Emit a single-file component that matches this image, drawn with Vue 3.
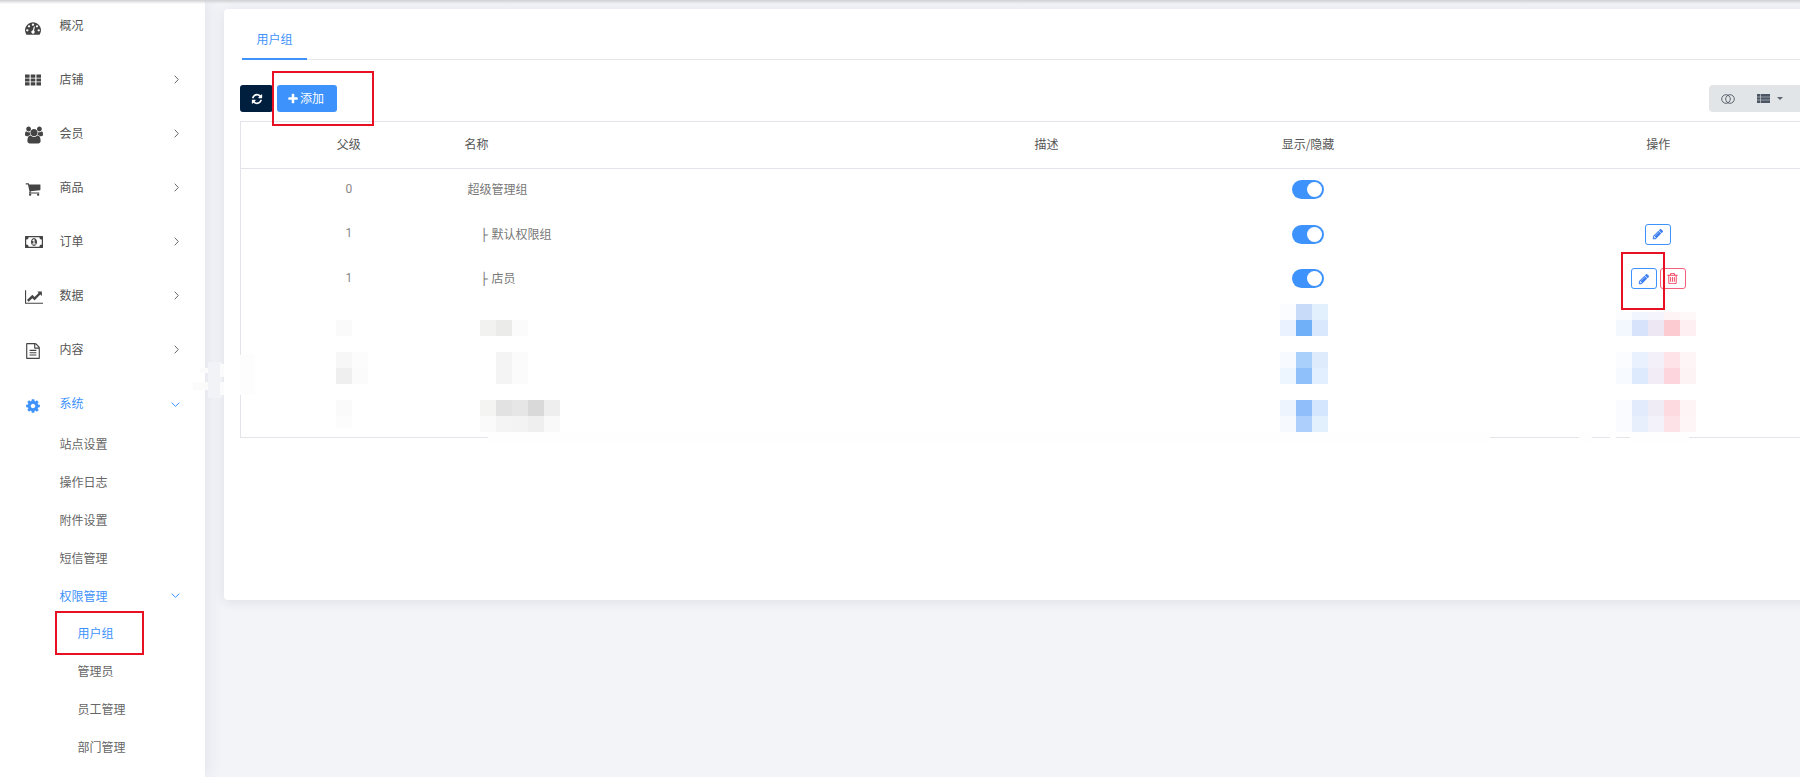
<script setup>
const fa = {
  dashboard: 'M384 1152q0-53-37.5-90.5t-90.5-37.5-90.5 37.5-37.5 90.5 37.5 90.5 90.5 37.5 90.5-37.5 37.5-90.5zm192-448q0-53-37.5-90.5t-90.5-37.5-90.5 37.5-37.5 90.5 37.5 90.5 90.5 37.5 90.5-37.5 37.5-90.5zm428 481l101-382q6-26-7.5-48.5t-38.5-29.5-48 6.5-30 39.5l-101 382q-60 5-107 43.5t-63 98.5q-20 77 20 146t117 89 146-20 89-117q16-60-6-117t-72-91zm660-33q0-53-37.5-90.5t-90.5-37.5-90.5 37.5-37.5 90.5 37.5 90.5 90.5 37.5 90.5-37.5 37.5-90.5zm-640-640q0-53-37.5-90.5t-90.5-37.5-90.5 37.5-37.5 90.5 37.5 90.5 90.5 37.5 90.5-37.5 37.5-90.5zm448 192q0-53-37.5-90.5t-90.5-37.5-90.5 37.5-37.5 90.5 37.5 90.5 90.5 37.5 90.5-37.5 37.5-90.5zm320 448q0 261-141 483-19 29-54 29h-1402q-35 0-54-29-141-221-141-483 0-182 71-348t191-286 286-191 348-71 348 71 286 191 191 286 71 348z',
  th: 'M0 288h512v352H0zM640 288h512v352H640zM1280 288h512v352h-512zM0 720h512v352H0zM640 720h512v352H640zM1280 720h512v352h-512zM0 1152h512v352H0zM640 1152h512v352H640zM1280 1152h512v352h-512z',
  users: 'M593 896q-162 5-265 128h-134q-82 0-138-40.5t-56-118.5q0-353 124-353 6 0 43.5 21t97.5 42.5 119 21.5q67 0 133-23-5 37-5 66 0 139 81 256zm1071 637q0 120-73 189.5t-194 69.5h-874q-121 0-194-69.5t-73-189.5q0-53 3.5-103.5t14-109 26.5-108.5 43-97.5 62-81 85.5-53.5 111.5-20q10 0 43 21.5t73 48 107 48 135 21.5 135-21.5 107-48 73-48 43-21.5q61 0 111.5 20t85.5 53.5 62 81 43 97.5 26.5 108.5 14 109 3.5 103.5zm-1024-1277q0 106-75 181t-181 75-181-75-75-181 75-181 181-75 181 75 75 181zm704 384q0 159-112.5 271.5t-271.5 112.5-271.5-112.5-112.5-271.5 112.5-271.5 271.5-112.5 271.5 112.5 112.5 271.5zm576 225q0 78-56 118.5t-138 40.5h-134q-103-123-265-128 81-117 81-256 0-29-5-66 66 23 133 23 59 0 119-21.5t97.5-42.5 43.5-21q124 0 124 353zm-128-609q0 106-75 181t-181 75-181-75-75-181 75-181 181-75 181 75 75 181z',
  cart: 'M704 1536q0 52-38 90t-90 38-90-38-38-90 38-90 90-38 90 38 38 90zm896 0q0 52-38 90t-90 38-90-38-38-90 38-90 90-38 90 38 38 90zm128-1088v512q0 24-16.5 42.5t-40.5 21.5l-1044 122q13 60 13 70 0 16-24 64h920q26 0 45 19t19 45-19 45-45 19h-1024q-26 0-45-19t-19-45q0-11 8-31.5t16-36 21.5-40 15.5-29.5l-177-823h-204q-26 0-45-19t-19-45 19-45 45-19h256q16 0 28.5 6.5t19.5 15.5 13 24.5 8 26 5.5 29.5 4.5 26h1201q26 0 45 19t19 45z',
  money: 'M768 1152h384v-96h-128v-448h-114l-148 137 77 80q42-37 55-57h2v288h-128v96zm512-256q0 70-21 142t-59.5 134-101.5 101-138 39-138-39-101.5-101-59.5-134-21-142 21-142 59.5-134 101.5-101 138-39 138 39 101.5 101 59.5 134 21 142zm512 256v-512q-106 0-181-75t-75-181h-1152q0 106-75 181t-181 75v512q106 0 181 75t75 181h1152q0-106 75-181t181-75zm128-832v1152q0 26-19 45t-45 19h-1792q-26 0-45-19t-19-45v-1152q0-26 19-45t45-19h1792q26 0 45 19t19 45z',
  chart: 'M2048 1536v128h-2048v-1536h128v1408h1920zm-128-1248v435q0 21-19.5 29.5t-35.5-7.5l-121-121-633 633q-10 10-23 10t-23-10l-233-233-416 416-192-192 585-585q10-10 23-10t23 10l233 233 464-464-121-121q-16-16-7.5-35.5t29.5-19.5h435q14 0 23 9t9 23z',
  file: 'M1596 380q28 28 48 76t20 88v1152q0 40-28 68t-68 28h-1344q-40 0-68-28t-28-68v-1600q0-40 28-68t68-28h896q40 0 88 20t76 48zm-444-244v376h376q-10-29-22-41l-313-313q-12-12-41-22zm384 1528v-1024h-416q-40 0-68-28t-28-68v-416h-768v1536h1280zm-1024-864q0-14 9-23t23-9h704q14 0 23 9t9 23v64q0 14-9 23t-23 9h-704q-14 0-23-9t-9-23v-64zm736 224q14 0 23 9t9 23v64q0 14-9 23t-23 9h-704q-14 0-23-9t-9-23v-64q0-14 9-23t23-9h704zm0 256q14 0 23 9t9 23v64q0 14-9 23t-23 9h-704q-14 0-23-9t-9-23v-64q0-14 9-23t23-9h704z',
  cog: 'M1152 896q0-106-75-181t-181-75-181 75-75 181 75 181 181 75 181-75 75-181zm512-109v222q0 12-8 23t-20 13l-185 28q-19 54-39 91 35 50 107 138 10 12 10 25t-9 23q-27 37-99 108t-94 71q-12 0-26-9l-138-108q-44 23-91 38-16 136-29 186-7 28-36 28h-222q-14 0-24.5-8.5t-11.5-21.5l-28-184q-49-16-90-37l-141 107q-10 9-25 9-14 0-25-11-126-114-165-168-7-10-7-23 0-12 8-23 15-21 51-66.5t54-70.5q-27-50-41-99l-183-27q-13-2-21-12.5t-8-23.5v-222q0-12 8-23t19-13l186-28q14-46 39-92-40-57-107-138-10-12-10-24 0-10 9-23 26-36 98.5-107.5t94.5-71.5q13 0 26 10l138 107q44-23 91-38 16-136 29-186 7-28 36-28h222q14 0 24.5 8.5t11.5 21.5l28 184q49 16 90 37l142-107q9-9 24-9 13 0 25 10 129 119 165 170 7 8 7 22 0 12-8 23-15 21-51 66.5t-54 70.5q26 50 41 98l183 28q13 2 21 12.5t8 23.5z',
  refresh: 'M1639 1056q0 5-1 7-64 268-268 434.5t-478 166.5q-146 0-282.5-55t-243.5-157l-129 129q-19 19-45 19t-45-19-19-45v-448q0-26 19-45t45-19h448q26 0 45 19t19 45-19 45l-137 137q71 66 161 102t187 36q134 0 250-65t186-179q11-17 53-117 8-23 30-23h192q13 0 22.5 9.5t9.5 22.5zm25-800v448q0 26-19 45t-45 19h-448q-26 0-45-19t-19-45 19-45l138-138q-148-137-349-137-134 0-250 65t-186 179q-11 17-53 117-8 23-30 23h-199q-13 0-22.5-9.5t-9.5-22.5v-7q65-268 270-434.5t480-166.5q146 0 284 55.5t245 156.5l130-129q19-19 45-19t45 19 19 45z',
  plus: 'M1600 736v192q0 40-28 68t-68 28h-416v416q0 40-28 68t-68 28h-192q-40 0-68-28t-28-68v-416h-416q-40 0-68-28t-28-68v-192q0-40 28-68t68-28h416v-416q0-40 28-68t68-28h192q40 0 68 28t28 68v416h416q40 0 68 28t28 68z',
  pencil: 'M491 1536l91-91-235-235-91 91v107h128v128h107zm523-928q0-22-22-22-10 0-17 7l-542 542q-7 7-7 17 0 22 22 22 10 0 17-7l542-542q7-7 7-17zm-54-192l416 416-832 832h-416v-416zm683 96q0 53-37 90l-166 166-416-416 166-165q36-38 90-38 53 0 91 38l235 234q37 39 37 91z',
  trash: 'M704 736v576q0 14-9 23t-23 9h-64q-14 0-23-9t-9-23v-576q0-14 9-23t23-9h64q14 0 23 9t9 23zm256 0v576q0 14-9 23t-23 9h-64q-14 0-23-9t-9-23v-576q0-14 9-23t23-9h64q14 0 23 9t9 23zm256 0v576q0 14-9 23t-23 9h-64q-14 0-23-9t-9-23v-576q0-14 9-23t23-9h64q14 0 23 9t9 23zm128 724v-948h-896v948q0 22 7 40.5t14.5 27 10.5 8.5h832q3 0 10.5-8.5t14.5-27 7-40.5zm-672-1076h448l-48-117q-7-9-17-11h-317q-10 2-17 11zm928 32v64q0 14-9 23t-23 9h-96v948q0 83-47 143.5t-113 60.5h-832q-66 0-113-58.5t-47-141.5v-952h-96q-14 0-23-9t-9-23v-64q0-14 9-23t23-9h309l70-167q15-37 54-63t79-26h320q40 0 79 26t54 63l70 167h309q14 0 23 9t9 23z',
  list: 'M0 288h416v352H0zM496 288h1296v352H496zM0 720h416v352H0zM496 720h1296v352H496zM0 1152h416v352H0zM496 1152h1296v352H496z'
}

const menu = [
  { label: '概况', icon: 'dashboard', vb: '0 0 1792 1792', w: 16, shift: 3 },
  { label: '店铺', icon: 'th', vb: '0 0 1792 1792', w: 16, arrow: true, shift: 1 },
  { label: '会员', icon: 'users', vb: '0 0 1920 1792', w: 18, arrow: true, shift: 2 },
  { label: '商品', icon: 'cart', vb: '0 0 1792 1792', w: 16, arrow: true, shift: 2 },
  { label: '订单', icon: 'money', vb: '0 0 1920 1792', w: 18, arrow: true, shift: 1 },
  { label: '数据', icon: 'chart', vb: '0 0 2048 1792', w: 18, arrow: true, shift: 2 },
  { label: '内容', icon: 'file', vb: '0 0 1792 1792', w: 16, arrow: true, shift: 2 }
]
const subs = ['站点设置', '操作日志', '附件设置', '短信管理']
const leaves = ['用户组', '管理员', '员工管理', '部门管理']

const rows = [
  { parent: '0', name: '超级管理组', ops: [] },
  { parent: '1', name: '默认权限组', child: true, ops: ['edit'] },
  { parent: '1', name: '店员', child: true, ops: ['edit', 'del'] },
  { blank: true },
  { blank: true },
  { blank: true }
]

function block(x, y, colors, h = 16) {
  return colors.map((c, i) => ({ x: x + i * 16, y, c, h }))
}
const mosaic = [
  ...block(1280, 304, ['#fafcff', '#c8dcfa', '#e2effd']),
  ...block(1280, 320, ['#e9f2fe', '#6fb0f9', '#d9e8fd']),
  ...block(1280, 352, ['#f7fbff', '#a9cffb', '#ddebfd']),
  ...block(1280, 368, ['#edf5fe', '#8fc0fa', '#e1effe']),
  ...block(1280, 400, ['#edf4fe', '#8fbefa', '#d4e6fd']),
  ...block(1280, 416, ['#f6faff', '#acd0fb', '#e2f0fe']),
  ...block(1616, 312, ['#fafcfe', '#f1f5fe', '#f5f3fb', '#fef4f5', '#fff8f8'], 8),
  ...block(1616, 320, ['#f2f8fd', '#d7e3fb', '#ece7f3', '#fccbd2', '#fef0f2']),
  ...block(1616, 352, ['#fafcff', '#eaf1fe', '#f3f0fa', '#fee3e8', '#fef5f6']),
  ...block(1616, 368, ['#f7fafe', '#dde9fd', '#f1ecf5', '#fcd6dc', '#fef3f4']),
  ...block(1616, 400, ['#f9fbff', '#e2ebfc', '#efecf5', '#fdd9e0', '#fef3f5']),
  ...block(1616, 416, ['#fafbff', '#e7effd', '#f3f1f9', '#fde2e7', '#fef5f7']),
  ...block(336, 320, ['#fafafa']),
  ...block(336, 352, ['#f7f7f7', '#fcfcfc']),
  ...block(336, 368, ['#efefef', '#fbfbfb']),
  ...block(336, 400, ['#fafafa']),
  ...block(336, 416, ['#fcfcfc'], 12),
  ...block(480, 320, ['#f2f2f1', '#ebebe9', '#fbfbfb']),
  ...block(496, 352, ['#f4f4f4', '#fbfbfb']),
  ...block(496, 368, ['#f4f4f4', '#fbfbfb']),
  ...block(480, 400, ['#f4f4f3', '#e2e2e2', '#e6e6e6', '#d9d9d9', '#eeeeee']),
  ...block(480, 416, ['#fafafa', '#f4f4f4', '#f3f3f3', '#efefef', '#f9f9f9'])
]
const smudges = [
  { x: 208, y: 362, w: 14, h: 36, c: '#f2f3f7' },
  { x: 200, y: 368, w: 8, h: 5, c: '#fbfbfc' },
  { x: 193, y: 382, w: 15, h: 8, c: '#fbfbfc' },
  { x: 220, y: 364, w: 4, h: 13, c: '#fbfbfc' },
  { x: 220, y: 382, w: 4, h: 13, c: '#fbfbfc' },
  { x: 240, y: 355, w: 15, h: 40, c: '#fcfdfc' },
  { x: 488, y: 432, w: 1002, h: 10, c: '#fdfefd' },
  { x: 1579, y: 432, w: 13, h: 10, c: '#fdfefd' },
  { x: 1610, y: 432, w: 6, h: 10, c: '#fdfefd' },
  { x: 1630, y: 432, w: 59, h: 10, c: '#fdfefd' }
]
</script>

<template>
  <div class="shell">
    <aside class="sidebar">
      <ul class="menu">
        <li v-for="m in menu" :key="m.label" class="item">
          <svg class="mi" :class="'s' + m.shift" :width="m.w" :height="m.w" :viewBox="m.vb"><path :d="fa[m.icon]" /></svg>
          <span class="label">{{ m.label }}</span>
          <svg v-if="m.arrow" class="chev" width="5" height="9" viewBox="0 0 5 9"><path d="M.7.7 4.3 4.5.7 8.3" /></svg>
        </li>
        <li class="item active open">
          <svg class="mi s2" width="16" height="16" viewBox="0 0 1792 1792"><path :d="fa.cog" /></svg>
          <span class="label">系统</span>
          <svg class="chevd" width="9" height="5" viewBox="0 0 9 5"><path d="M.7.7 4.5 4.3 8.3.7" /></svg>
        </li>
        <li v-for="s in subs" :key="s" class="sub">{{ s }}</li>
        <li class="sub active between">
          <span>权限管理</span>
          <svg class="chevd" width="9" height="5" viewBox="0 0 9 5"><path d="M.7.7 4.5 4.3 8.3.7" /></svg>
        </li>
        <li v-for="(l, i) in leaves" :key="l" class="leaf" :class="{ active: i === 0 }">{{ l }}</li>
      </ul>
    </aside>

    <main class="main">
      <section class="card">
        <nav class="tabs"><a class="tab">用户组</a></nav>
        <div class="toolbar">
          <div class="left">
            <button class="btn navy"><svg width="12" height="12" viewBox="0 0 1792 1792"><path :d="fa.refresh" /></svg></button>
            <button class="btn blue"><svg width="12" height="12" viewBox="0 0 1792 1792"><path :d="fa.plus" /></svg><span>添加</span></button>
          </div>
          <div class="group">
            <svg class="rings" width="14" height="10" viewBox="0 0 14 10"><circle cx="5" cy="5" r="4.3" /><circle cx="9" cy="5" r="4.3" /></svg>
            <svg class="thl" width="13" height="13" viewBox="0 0 1792 1792"><path :d="fa.list" /></svg>
            <span class="caret"></span>
          </div>
        </div>
        <table class="table">
          <colgroup>
            <col class="c1" /><col class="c2" /><col class="c3" /><col class="c4" /><col class="c5" />
          </colgroup>
          <thead>
            <tr>
              <th>父级</th><th class="tl">名称</th><th>描述</th><th>显示/隐藏</th><th>操作</th>
            </tr>
          </thead>
          <tbody>
            <tr v-for="(r, i) in rows" :key="i">
              <template v-if="!r.blank">
                <td class="num">{{ r.parent }}</td>
                <td class="tl name" :class="{ child: r.child }"><span v-if="r.child" class="tree">├</span>{{ r.name }}</td>
                <td></td>
                <td class="flat"><div class="swrap"><span class="switch"><i></i></span></div></td>
                <td class="flat">
                  <div class="ops">
                    <button v-if="r.ops.includes('edit')" class="op edit"><svg width="12" height="12" viewBox="0 0 1792 1792"><path :d="fa.pencil" /></svg></button>
                    <button v-if="r.ops.includes('del')" class="op del"><svg width="13" height="13" viewBox="0 0 1792 1792"><path :d="fa.trash" /></svg></button>
                  </div>
                </td>
              </template>
              <td v-else colspan="5"></td>
            </tr>
          </tbody>
        </table>
      </section>
    </main>

    <div class="topshade"></div>

    <div v-for="(s, i) in smudges" :key="'s' + i" class="patch" :style="{ left: s.x + 'px', top: s.y + 'px', width: s.w + 'px', height: s.h + 'px', background: s.c }"></div>
    <div v-for="(b, i) in mosaic" :key="'m' + i" class="patch" :style="{ left: b.x + 'px', top: b.y + 'px', height: b.h + 'px', background: b.c }"></div>

    <div class="mark mark-add"></div>
    <div class="mark mark-edit"></div>
    <div class="mark mark-nav"></div>
  </div>
</template>

<style>
html, body { margin: 0; overflow: hidden; background: #f3f4f8; }
</style>

<style scoped>
.shell {
  position: relative;
  display: flex;
  width: 1800px;
  height: 777px;
  overflow: hidden;
  background: #f3f4f8;
  font-family: "Noto Sans CJK SC", Roboto, "Liberation Sans", sans-serif;
  font-size: 12px;
  color: #666;
}
.topshade {
  position: absolute;
  left: 0;
  top: 0;
  width: 100%;
  height: 4px;
  background: linear-gradient(#cfd0d2, rgba(220, 221, 224, 0));
}
.sidebar {
  flex: 0 0 205px;
  background: #fff;
  box-shadow: 0 0 18px rgba(40, 50, 90, .1);
  position: relative;
}
.menu { list-style: none; margin: -2px 0 0; padding: 0; }
.item {
  display: flex;
  align-items: center;
  height: 54px;
  padding-left: 25px;
  color: #555;
}
.mi { fill: #444; flex: none; }
.s1 { margin-top: 2px; }
.s2 { margin-top: 4px; }
.s3 { margin-top: 6px; }
.label { position: absolute; left: 59.5px; margin-top: -2px; }
.chev { position: absolute; left: 173.5px; fill: none; stroke: #666; stroke-width: 1; }
.chevd { fill: none; stroke: #3d92fc; stroke-width: 1; }
.item .chevd { position: absolute; left: 171px; }
.item.active { color: #3d92fc; }
.item.active .mi { fill: #3d92fc; }
.item.open { height: 49px; align-items: flex-start; padding-top: 18px; box-sizing: border-box; }
.item.open .label { top: 394px; margin-top: 0; }
.item.open .chevd { top: 402px; }
.sub {
  height: 38px;
  line-height: 38px;
  padding-left: 59.5px;
  color: #666;
}
.sub.active { color: #3d92fc; }
.between { position: relative; }
.between .chevd { position: absolute; left: 171px; top: 16px; }
.leaf {
  height: 38px;
  line-height: 36px;
  padding-left: 77.5px;
  color: #666;
}
.leaf.active { color: #3d92fc; }

.main { flex: 1; min-width: 0; padding: 9px 0 0 19px; }
.card {
  width: 1635px;
  height: 591px;
  box-sizing: border-box;
  padding: 0 16px;
  background: #fff;
  border-radius: 4px;
  box-shadow: 0 2px 12px rgba(40, 50, 90, .1);
}
.tabs {
  display: flex;
  height: 51px;
  margin-left: 2px;
  border-bottom: 1px solid #e5e7ea;
  box-sizing: border-box;
}
.tab {
  width: 65px;
  height: 51px;
  box-sizing: border-box;
  border-bottom: 2px solid #3d92fc;
  text-align: center;
  line-height: 60px;
  color: #3d92fc;
}
.toolbar {
  display: flex;
  justify-content: space-between;
  align-items: flex-start;
  margin-top: 25px;
  height: 27px;
}
.left { display: flex; gap: 4px; }
.btn {
  height: 27px;
  border: 0;
  padding: 0;
  border-radius: 3px;
  display: flex;
  align-items: center;
  justify-content: center;
  color: #fff;
  font: inherit;
  fill: #fff;
}
.navy { width: 33px; background: #001f3f; }
.blue { width: 60px; background: #3d92fc; gap: 1px; padding-right: 3px; box-sizing: border-box; }
.blue span { margin-top: -2px; }
.group {
  width: 134px;
  height: 27px;
  background: #e2e5e8;
  border-radius: 4px 0 0 4px;
  display: flex;
  align-items: center;
  padding-left: 12px;
  box-sizing: border-box;
}
.rings { fill: none; stroke: #5c6570; stroke-width: 1; }
.thl { fill: #4b5563; margin-left: 22px; }
.caret {
  margin-left: 7px;
  border-left: 3.5px solid transparent;
  border-right: 3.5px solid transparent;
  border-top: 3.5px solid #5c6570;
}
.table {
  table-layout: fixed;
  width: 1603px;
  margin-top: 9px;
  border-collapse: collapse;
  border: 1px solid #e3e4ea;
}
.c1 { width: 216px; }
.c2 { width: 494px; }
.c3 { width: 192px; }
.c4 { width: 331px; }
.c5 { width: 370px; }
th {
  height: 47px;
  padding: 0 0 3px;
  box-sizing: border-box;
  font-weight: 400;
  color: #555;
  text-align: center;
  border-bottom: 1px solid #e3e4ea;
}
td {
  height: 44.8px;
  padding: 0 0 5px;
  box-sizing: border-box;
  text-align: center;
  color: #777;
}
td.flat { padding: 0 0 3px; }
.tl { text-align: left; padding-left: 8px; }
.num { font-family: Roboto, sans-serif; color: #888; }
.name { padding-left: 11px; }
.name.child { padding-left: 24px; }
.tree {
  display: inline-block;
  width: 11px;
  font-family: "DejaVu Sans Mono", monospace;
  color: #777;
}
.swrap { display: flex; justify-content: center; }
.switch {
  display: block;
  position: relative;
  width: 32px;
  height: 19px;
  border-radius: 10px;
  background: #3d92fc;
}
.switch i {
  position: absolute;
  right: 2px;
  top: 2px;
  width: 15px;
  height: 15px;
  border-radius: 50%;
  background: #fff;
}
.ops { display: flex; justify-content: center; gap: 3px; }
.op {
  width: 26px;
  height: 21px;
  padding: 0;
  display: flex;
  align-items: center;
  justify-content: center;
  background: #fff;
  border-radius: 3px;
  border: 1px solid;
}
.edit { border-color: #3d92fc; fill: #3d7ff0; }
.del { border-color: #f4607c; fill: #f4405e; }

.patch { position: absolute; width: 16px; }
.mark { position: absolute; border: 2px solid #e81123; box-sizing: border-box; }
.mark-add { left: 272px; top: 71px; width: 102px; height: 55px; }
.mark-edit { left: 1621px; top: 252px; width: 44px; height: 58px; }
.mark-nav { left: 55px; top: 611px; width: 89px; height: 44px; }
</style>
